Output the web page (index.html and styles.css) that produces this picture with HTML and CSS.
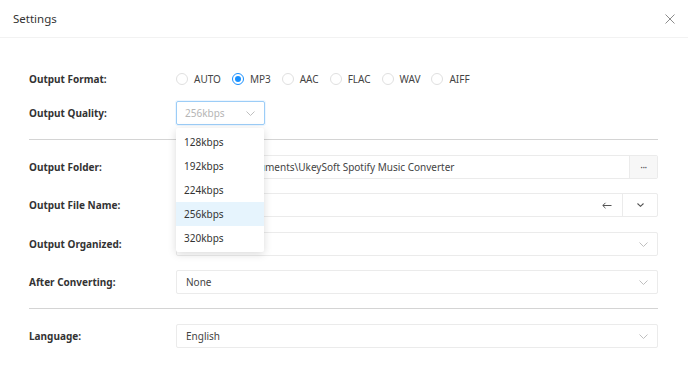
FILE: index.html
```html
<!DOCTYPE html>
<html>
<head>
<meta charset="utf-8">
<title>Settings</title>
<link rel="stylesheet" href="styles.css">
</head>
<body>
<div class="dialog">
  <div class="header">
    <span class="title">Settings</span>
    <span class="close"><svg width="10" height="10" viewBox="0 0 10 10"><path d="M0.5 0.5 L9.5 9.5 M9.5 0.5 L0.5 9.5" stroke="#8c8c8c" stroke-width="1" fill="none"/></svg></span>
  </div>
  <div class="body">
    <div class="row row-format">
      <div class="label">Output Format:</div>
      <div class="radios">
        <span class="radio"><span class="dot"></span>AUTO</span>
        <span class="radio checked"><span class="dot"></span>MP3</span>
        <span class="radio"><span class="dot"></span>AAC</span>
        <span class="radio"><span class="dot"></span>FLAC</span>
        <span class="radio"><span class="dot"></span>WAV</span>
        <span class="radio"><span class="dot"></span>AIFF</span>
      </div>
    </div>
    <div class="row row-quality">
      <div class="label">Output Quality:</div>
      <div class="select-wrap">
        <div class="select focused">
          <span class="placeholder">256kbps</span>
          <svg class="chev" width="9" height="5" viewBox="0 0 9 5"><path d="M0.5 0.5 L4.5 4.5 L8.5 0.5" stroke="#bfbfbf" fill="none"/></svg>
        </div>
        <ul class="menu">
          <li>128kbps</li>
          <li>192kbps</li>
          <li>224kbps</li>
          <li class="active">256kbps</li>
          <li>320kbps</li>
        </ul>
      </div>
    </div>
    <div class="divider first"></div>
    <div class="row">
      <div class="label">Output Folder:</div>
      <div class="field">
        <span class="value">C:\Users\Li\Documents\UkeySoft Spotify Music Converter</span>
        <span class="addon dots">···</span>
      </div>
    </div>
    <div class="row">
      <div class="label">Output File Name:</div>
      <div class="field">
        <span class="value"></span>
        <span class="suffix"><svg width="10" height="7" viewBox="0 0 10 7"><path d="M9.5 3.5 H1 M3.5 0.8 L0.8 3.5 L3.5 6.2" stroke="#555" fill="none"/></svg></span>
        <span class="addon caret"><svg width="7" height="4" viewBox="0 0 7 4"><path d="M0.5 0.5 L3.5 3.3 L6.5 0.5" stroke="#555" stroke-width="1.1" fill="none"/></svg></span>
      </div>
    </div>
    <div class="row row-organized">
      <div class="label">Output Organized:</div>
      <div class="field">
        <span class="value"></span>
        <svg class="chev" width="9" height="5" viewBox="0 0 9 5"><path d="M0.5 0.5 L4.5 4.5 L8.5 0.5" stroke="#bfbfbf" fill="none"/></svg>
      </div>
    </div>
    <div class="row">
      <div class="label">After Converting:</div>
      <div class="field">
        <span class="value">None</span>
        <svg class="chev" width="9" height="5" viewBox="0 0 9 5"><path d="M0.5 0.5 L4.5 4.5 L8.5 0.5" stroke="#bfbfbf" fill="none"/></svg>
      </div>
    </div>
    <div class="divider second"></div>
    <div class="row row-lang">
      <div class="label">Language:</div>
      <div class="field">
        <span class="value">English</span>
        <svg class="chev" width="9" height="5" viewBox="0 0 9 5"><path d="M0.5 0.5 L4.5 4.5 L8.5 0.5" stroke="#bfbfbf" fill="none"/></svg>
      </div>
    </div>
  </div>
</div>
</body>
</html>
```
FILE: styles.css
```css
* { box-sizing: border-box; }
html, body { margin: 0; padding: 0; background: #fff; }
body {
  font-family: "Noto Sans", "Open Sans", sans-serif;
  font-size: 10px;
  color: #333;
}
.dialog {
  width: 688px;
  height: 377px;
  background: #fff;
  overflow: hidden;
}
.header {
  height: 38px;
  border-bottom: 1px solid #f2f2f2;
  display: flex;
  align-items: center;
  justify-content: space-between;
  padding: 0 13px 0 13px;
}
.title { font-size: 11.5px; color: #333; }
.close { display: flex; width: 10px; height: 10px; }
.body {
  padding: 29px 30px 0 29px;
  display: flex;
  flex-direction: column;
}
.row {
  display: flex;
  align-items: center;
  height: 24px;
}
.row + .row { margin-top: 14px; }
.row.row-quality { margin-top: 10px; }
.row.row-organized { margin-top: 15px; }
.label {
  width: 147px;
  flex: none;
  font-weight: 700;
  color: #333;
}
.radios { display: flex; align-items: center; }
.radio {
  display: flex;
  align-items: center;
  margin-right: 11px;
  color: #444;
}
.radio .dot {
  width: 12px;
  height: 12px;
  border: 1px solid #e0e0e0;
  border-radius: 50%;
  margin-right: 6px;
  display: flex;
  align-items: center;
  justify-content: center;
}
.radio.checked .dot { border-color: #1890ff; }
.radio.checked .dot::after {
  content: "";
  width: 6px;
  height: 6px;
  border-radius: 50%;
  background: #1890ff;
}
.select-wrap { position: relative; }
.select {
  width: 89px;
  height: 24px;
  border: 1px solid #9ccdf7;
  border-radius: 2px;
  box-shadow: 0 0 0 1px rgba(24, 144, 255, 0.08);
  display: flex;
  align-items: center;
  justify-content: space-between;
  padding: 0 9px 0 8px;
}
.placeholder { color: #b5b5b5; }
.menu {
  position: absolute;
  top: 27px;
  left: 0;
  width: 88px;
  margin: 0;
  padding: 2px 0;
  list-style: none;
  background: #fff;
  box-shadow: 0 2px 8px rgba(0, 0, 0, 0.15);
  border-radius: 2px;
  z-index: 10;
}
.menu li {
  height: 24px;
  line-height: 24px;
  padding: 0 8px;
  color: #333;
}
.menu li.active { background: #e6f4fd; }
.divider { height: 1px; background: #d4d4d4; flex: none; }
.divider.first { margin-top: 14px; }
.divider + .row { margin-top: 15px; }
.divider.second { margin-top: 14px; }
.field {
  flex: 1;
  height: 24px;
  border: 1px solid #ebebeb;
  border-radius: 2px;
  display: flex;
  align-items: center;
  padding-left: 9px;
  overflow: hidden;
}
.field .value { flex: 1; white-space: nowrap; overflow: hidden; color: #444; }
.field .chev { margin-right: 9px; flex: none; }
.addon {
  flex: none;
  height: 100%;
  display: flex;
  align-items: center;
  justify-content: center;
  border-left: 1px solid #ebebeb;
}
.addon.dots {
  width: 28px;
  background: #f7f7f7;
  color: #555;
  font-size: 10px;
  letter-spacing: -0.5px;
}
.addon.caret { width: 35px; }
.suffix { display: flex; margin-right: 10px; }
```
